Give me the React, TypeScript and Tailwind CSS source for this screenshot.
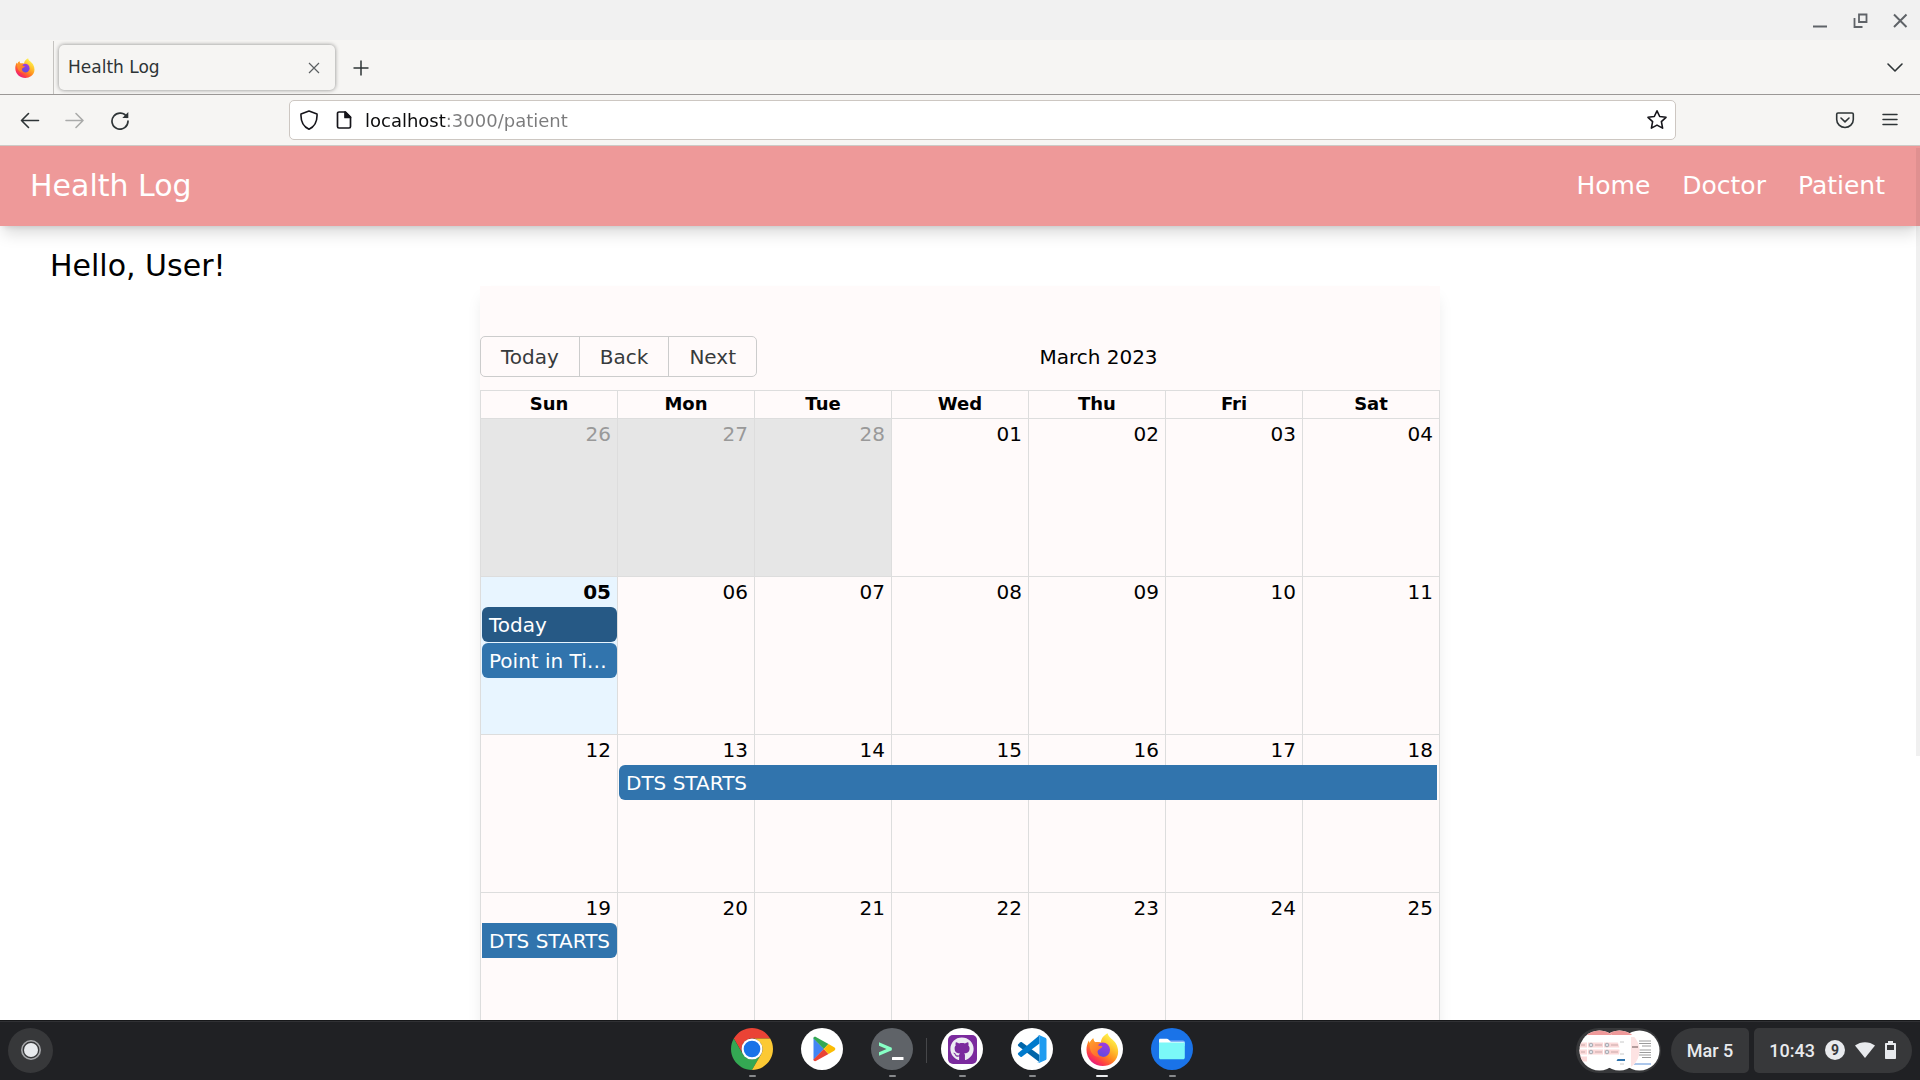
import type { ReactNode } from 'react';
import clsx from 'clsx';
import { FaGithub } from 'react-icons/fa';

interface CalendarEvent {
  title: string;
  width: string;
  className: string;
}

interface Day {
  label: string;
  offRange?: boolean;
  today?: boolean;
  events?: CalendarEvent[];
}

interface ShelfApp {
  name: string;
  icon: ReactNode;
  running?: boolean;
  active?: boolean;
}

const WEEKDAYS = ['Sun', 'Mon', 'Tue', 'Wed', 'Thu', 'Fri', 'Sat'];

const WEEKS: Day[][] = [
  [
    { label: '26', offRange: true },
    { label: '27', offRange: true },
    { label: '28', offRange: true },
    { label: '01' },
    { label: '02' },
    { label: '03' },
    { label: '04' },
  ],
  [
    {
      label: '05',
      today: true,
      events: [
        { title: 'Today', width: 'w-full', className: 'rounded-md bg-[#265985]' },
        { title: 'Point in Time Event', width: 'w-full', className: 'rounded-md bg-[#3174ad]' },
      ],
    },
    { label: '06' },
    { label: '07' },
    { label: '08' },
    { label: '09' },
    { label: '10' },
    { label: '11' },
  ],
  [
    { label: '12' },
    {
      label: '13',
      events: [
        { title: 'DTS STARTS', width: 'w-[calc(600%+8px)]', className: 'rounded-l-md bg-[#3174ad]' },
      ],
    },
    { label: '14' },
    { label: '15' },
    { label: '16' },
    { label: '17' },
    { label: '18' },
  ],
  [
    {
      label: '19',
      events: [{ title: 'DTS STARTS', width: 'w-full', className: 'rounded-r-md bg-[#3174ad]' }],
    },
    { label: '20' },
    { label: '21' },
    { label: '22' },
    { label: '23' },
    { label: '24' },
    { label: '25' },
  ],
];

function FirefoxLogo({ size, id }: { size: number; id: string }) {
  return (
    <svg width={size} height={size} viewBox="0 0 32 32">
      <defs>
        <linearGradient id={`${id}-body`} x1="0.8" y1="0.1" x2="0.2" y2="0.95">
          <stop offset="0" stopColor="#fff44f" />
          <stop offset="0.3" stopColor="#ffc02c" />
          <stop offset="0.55" stopColor="#ff8a1e" />
          <stop offset="0.8" stopColor="#ff3f46" />
          <stop offset="1" stopColor="#e31587" />
        </linearGradient>
        <linearGradient id={`${id}-globe`} x1="0.7" y1="0" x2="0.3" y2="1">
          <stop offset="0" stopColor="#a33be0" />
          <stop offset="1" stopColor="#5b4be0" />
        </linearGradient>
        <linearGradient id={`${id}-head`} x1="0" y1="0" x2="0.6" y2="1">
          <stop offset="0" stopColor="#ffa52a" />
          <stop offset="1" stopColor="#ff6a2e" />
        </linearGradient>
      </defs>
      <path
        d="M21 .3C21.6 4.6 26.6 6 29 10.2c3.8 7 2.5 14.2-3 18.6-5.8 4.4-14.8 4.2-20.4-.8C-.8 22.3-.6 13.2 2.8 7.2l.7 2.6C4.3 8 5.5 6.500 7 5.200c.1 1.800.8 2.900 1.800 3.700 2-.4 4.200-.2 5.600.3C14.600 5.500 17.400 2 21 .3Z"
        fill={`url(#${id}-body)`}
      />
      <circle cx="16.300" cy="16.300" r="7" fill={`url(#${id}-globe)`} />
      <path
        d="M3.500 9.800C4.300 8 5.500 6.500 7 5.200c.1 1.800.8 2.900 1.800 3.700 2-.4 4.200-.2 5.600.3-1.800 1-2.400 2-2.400 3.100l3.800.4c.2 1.500-1.200 2.200-3.200 3.200-1 .6-1.600 1.400-1.300 3 .3 2.200 2.200 4 5.200 4.200-5 1.600-9.500-.8-11.500-4.600-1.300-2.900-1.500-5.900-1.500-8.700Z"
        fill={`url(#${id}-head)`}
      />
    </svg>
  );
}

function ChromeIcon() {
  return (
    <svg width="42" height="42" viewBox="0 0 48 48">
      <path d="M3.220 12A24 24 0 0 1 44.780 12H24A12 12 0 0 0 13.610 30Z" fill="#ea4335" />
      <path d="M3.220 12L13.610 30A12 12 0 0 0 34.390 30L24 48A24 24 0 0 1 3.220 12Z" fill="#34a853" />
      <path d="M44.780 12A24 24 0 0 1 24 48L34.390 30A12 12 0 0 0 24 12Z" fill="#fcc934" />
      <circle cx="24" cy="24" r="12" fill="#fff" />
      <circle cx="24" cy="24" r="9.500" fill="#1a73e8" />
    </svg>
  );
}

function PlayIcon() {
  return (
    <svg width="42" height="42" viewBox="0 0 42 42">
      <circle cx="21" cy="21" r="21" fill="#fff" />
      <path d="M12.500 10v22L23 21Z" fill="#4285f4" />
      <path d="M12.300 10.200c.4-1.300 1.700-1.700 3-1L27.500 16 22.800 21Z" fill="#34a853" />
      <path d="M12.300 31.800c.4 1.300 1.700 1.700 3 1L27.500 26 22.800 21Z" fill="#ea4335" />
      <path d="M27.500 16l5.700 3.300c1.500.9 1.500 2.500 0 3.400L27.500 26l-4.800-5Z" fill="#fbbc04" />
    </svg>
  );
}

function TerminalIcon() {
  return (
    <svg width="42" height="42" viewBox="0 0 42 42">
      <circle cx="21" cy="21" r="21" fill="#5f6368" />
      <path d="M8 14.300v3.500l7.500 3.200L8 24.200v3.500l12.800-5.400v-2.600Z" fill="#87ffc5" />
      <rect x="21" y="29" width="11.500" height="3" rx="0.500" fill="#fff" />
    </svg>
  );
}

function GithubIcon() {
  return (
    <span className="flex size-[42px] items-center justify-center rounded-full bg-white">
      <span className="flex size-[29px] items-center justify-center rounded-[5px] bg-[#7b2a9e]">
        <FaGithub className="size-6 text-[#ececf2]" />
      </span>
    </span>
  );
}

function CodeIcon() {
  return (
    <svg width="42" height="42" viewBox="0 0 42 42">
      <circle cx="21" cy="21" r="21" fill="#fff" />
      <path d="M7.200 16.300l2.200-2c.5-.4 1-.4 1.500-.1L28.500 27v7.200L7.200 17.900c-.5-.5-.5-1.100 0-1.600Z" fill="#0065a9" />
      <path d="M7.200 26.700l2.200 2c.5.4 1 .4 1.500.1L28.500 15.500V7.200L7.200 25.100c-.5.500-.5 1.100 0 1.600Z" fill="#007acc" />
      <path d="M28 7l6.200 2.700c.9.400 1.300 1 1.300 1.900v18.800c0 .9-.4 1.500-1.300 1.900L28 35c-.900.300-1.500 0-2-.5.900.700 2.500.200 2.500-1.200V8.700c0-1.400-1.600-1.900-2.500-1.200.5-.5 1.100-.8 2-.5Z" fill="#1f9cf0" />
    </svg>
  );
}

function FirefoxShelfIcon() {
  return (
    <span className="flex size-[42px] items-center justify-center rounded-full bg-white">
      <FirefoxLogo size={33} id="shelf-firefox" />
    </span>
  );
}

function FilesIcon() {
  return (
    <svg width="42" height="42" viewBox="0 0 42 42">
      <circle cx="21" cy="21" r="21" fill="#1a73e8" />
      <path d="M18 12.500h14c1 0 1.800.8 1.800 1.800V18H18Z" fill="#8ab4f8" />
      <path d="M8 12c0-.8.600-1.300 1.300-1.300H16c.5 0 .9.200 1.200.5l2.800 2.800H32c1 0 1.800.8 1.800 1.500H8Z" fill="#fff" />
      <path d="M8 14.500h25.800v15c0 1-.8 1.800-1.800 1.800H9.800c-1 0-1.800-.8-1.800-1.800Z" fill="#7bf8f8" />
    </svg>
  );
}

const SHELF_APPS: ShelfApp[] = [
  { name: 'Chrome', icon: <ChromeIcon />, running: true },
  { name: 'Play Store', icon: <PlayIcon /> },
  { name: 'Terminal', icon: <TerminalIcon />, running: true },
  { name: 'GitHub Desktop', icon: <GithubIcon />, running: true },
  { name: 'Visual Studio Code', icon: <CodeIcon />, running: true },
  { name: 'Firefox', icon: <FirefoxShelfIcon />, running: true, active: true },
  { name: 'Files', icon: <FilesIcon />, running: true },
];

function WindowControls() {
  return (
    <div className="flex h-10 justify-end bg-[#f1f1f1]">
      <button aria-label="Minimize" className="flex w-10 items-center justify-center">
        <svg width="20" height="20" viewBox="0 0 20 20" stroke="#5f6368" strokeWidth="2">
          <path d="M3 16.500h14" />
        </svg>
      </button>
      <button aria-label="Restore" className="flex w-10 items-center justify-center">
        <svg width="20" height="20" viewBox="0 0 20 20" fill="none" stroke="#5f6368" strokeWidth="1.800">
          <path d="M9 4.500h7.500V12H9ZM4.500 8v9H12.500" />
        </svg>
      </button>
      <button aria-label="Close" className="flex w-10 items-center justify-center">
        <svg width="20" height="20" viewBox="0 0 20 20" stroke="#5f6368" strokeWidth="2">
          <path d="M4 4.500l12.500 12.500M16.500 4.500L4 17" />
        </svg>
      </button>
    </div>
  );
}

function TabStrip() {
  return (
    <div className="flex h-[55px] items-center border-b border-[#9b9896] bg-[#f6f5f3] pt-px text-[#2e3436]">
      <button aria-label="Firefox View" className="flex w-[54px] items-center justify-center self-stretch border-r border-[#c4c2bf] pr-1">
        <FirefoxLogo size={20} id="tab-firefox" />
      </button>
      <div className="ml-[5px] flex h-[45px] w-[276px] items-center justify-between rounded-[5px] bg-[#f6f5f3] pr-[9px] pl-[9px] shadow-[0_0_4px_rgba(0,0,0,0.45)]">
        <span className="text-[17px]">Health Log</span>
        <button aria-label="Close tab" className="flex size-6 items-center justify-center">
          <svg width="12" height="12" viewBox="0 0 12 12" stroke="#5b5f61" strokeWidth="1.200">
            <path d="M1 1l10 10M11 1L1 11" />
          </svg>
        </button>
      </div>
      <button aria-label="New tab" className="ml-[6px] flex size-10 items-center justify-center">
        <svg width="16" height="16" viewBox="0 0 16 16" stroke="#2e3436" strokeWidth="1.500">
          <path d="M8 .5v15M.5 8h15" />
        </svg>
      </button>
      <button aria-label="List all tabs" className="mr-[5px] ml-auto flex size-10 items-center justify-center">
        <svg width="18" height="12" viewBox="0 0 18 12" fill="none" stroke="#2e3436" strokeWidth="1.600" strokeLinecap="round" strokeLinejoin="round">
          <path d="M2 2l7 7 7-7" />
        </svg>
      </button>
    </div>
  );
}

function ToolButton({ label, children }: { label: string; children: ReactNode }) {
  return (
    <button aria-label={label} className="flex h-10 w-[45px] items-center justify-center">
      {children}
    </button>
  );
}

function AddressBar() {
  return (
    <div className="flex h-[51px] items-center border-b border-[#cdcac6] bg-[#f6f5f3] pr-2 pl-[7px]">
      <ToolButton label="Back">
        <svg width="20" height="20" viewBox="0 0 20 20" fill="none" stroke="#2e3436" strokeWidth="1.600" strokeLinecap="round" strokeLinejoin="round">
          <path d="M18.500 10.500H1.500M8.500 3.500l-7 7 7 7" />
        </svg>
      </ToolButton>
      <ToolButton label="Forward">
        <svg width="20" height="20" viewBox="0 0 20 20" fill="none" stroke="#aaabaa" strokeWidth="1.600" strokeLinecap="round" strokeLinejoin="round">
          <path d="M1 10.500h17M11 3.500l7 7-7 7" />
        </svg>
      </ToolButton>
      <ToolButton label="Reload">
        <svg width="20" height="20" viewBox="0 0 20 20" fill="none" stroke="#2e3436" strokeWidth="1.700" strokeLinecap="round">
          <path d="M17 7.300A8 8 0 1 0 18 11" />
          <path d="M18.300 2v6h-6Z" fill="#2e3436" stroke="none" />
        </svg>
      </ToolButton>
      <div className="mr-[146px] ml-[147px] flex h-10 flex-1 items-center rounded-[5px] border border-[#cdc7c2] bg-white">
        <button aria-label="Tracking protection" className="flex w-[38px] justify-center">
          <svg width="20" height="20" viewBox="0 0 20 20" fill="none" stroke="#15141a" strokeWidth="1.600" strokeLinejoin="round">
            <path d="M10 1l8 3c.400 7-2 12.500-8 15.200C4 16.500 1.600 11 2 4Z" />
          </svg>
        </button>
        <button aria-label="Site information" className="flex w-8 justify-center">
          <svg width="20" height="20" viewBox="0 0 20 20" fill="none" stroke="#15141a" strokeWidth="1.700" strokeLinejoin="round">
            <path d="M5 2h6.500l5 5v9.500c0 .8-.7 1.500-1.500 1.500H5c-.8 0-1.500-.7-1.500-1.500v-13C3.500 2.700 4.200 2 5 2Z" />
            <path d="M11 2v5.500h5.500Z" fill="#15141a" />
          </svg>
        </button>
        <input
          type="text"
          aria-label="Address"
          defaultValue="localhost:3000/patient"
          className="ml-[5px] h-full flex-1 bg-[linear-gradient(90deg,#0c0c0d_81px,#7b7b7c_81px)] bg-clip-text text-[18px] text-transparent caret-black outline-none"
        />
        <button aria-label="Bookmark this page" className="flex w-9 justify-center">
          <svg width="22" height="22" viewBox="0 0 22 22" fill="none" stroke="#15141a" strokeWidth="1.600" strokeLinejoin="round">
            <path d="M11 1.800l2.700 5.700 6.300.8-4.600 4.300 1.200 6.500-5.600-3-5.600 3 1.200-6.500L2 8.300l6.300-.8Z" />
          </svg>
        </button>
      </div>
      <ToolButton label="Save to Pocket">
        <svg width="20" height="20" viewBox="0 0 20 20" fill="none" stroke="#2e3436" strokeWidth="1.600" strokeLinecap="round" strokeLinejoin="round">
          <path d="M3 3h14c.8 0 1.300.5 1.300 1.300V9.500a8.300 8 0 0 1-16.600 0V4.300C1.700 3.500 2.200 3 3 3Z" />
          <path d="M6 8l4 3.800L14 8" />
        </svg>
      </ToolButton>
      <ToolButton label="Open menu">
        <svg width="20" height="20" viewBox="0 0 20 20" stroke="#2e3436" strokeWidth="1.500" strokeLinecap="round">
          <path d="M3 4.500h14M3 9.500h14M3 14.500h14" />
        </svg>
      </ToolButton>
    </div>
  );
}

function SiteHeader() {
  return (
    <header className="relative flex h-20 items-center justify-between bg-[#ee9999] pr-[35px] pl-[30px] text-white shadow-[0_10px_15px_-3px_rgba(0,0,0,0.15),0_4px_6px_-4px_rgba(0,0,0,0.15)]">
      <span className="text-[30px] leading-10">Health Log</span>
      <nav className="flex gap-8 text-[25px] leading-8">
        <a href="#home">Home</a>
        <a href="#doctor">Doctor</a>
        <a href="#patient">Patient</a>
      </nav>
    </header>
  );
}

function DayCell({ day }: { day: Day }) {
  return (
    <td
      className={clsx(
        'h-[158px] border-t border-l border-[#dddddd] p-0 align-top',
        day.offRange && 'bg-[#e6e6e6] text-[#999999]',
        day.today && 'bg-[#e8f5ff]',
      )}
    >
      <div className={clsx('pr-[6px] text-right leading-[30px]', day.today && 'font-bold')}>
        {day.label}
      </div>
      {day.events && (
        <div className="flex flex-col gap-px pl-px">
          {day.events.map((event) => (
            <button
              key={event.title}
              className={clsx(
                'relative h-[35px] truncate pr-[5px] pl-[7px] text-left text-white',
                event.width,
                event.className,
              )}
            >
              {event.title}
            </button>
          ))}
        </div>
      )}
    </td>
  );
}

function MonthCalendar() {
  return (
    <section className="mx-auto w-1/2 bg-[#fffafa] pt-[50px] text-[20px] shadow-[0_10px_15px_-3px_rgba(0,0,0,0.1)]">
      <div className="mb-[13px] flex items-center">
        <div className="flex h-[41px] divide-x divide-[#cccccc] rounded-[5px] border border-[#cccccc] text-[#373a3c]">
          <button className="px-5">Today</button>
          <button className="px-5">Back</button>
          <button className="px-5">Next</button>
        </div>
        <span className="flex-1 text-center">March 2023</span>
      </div>
      <table className="w-full table-fixed border-separate border-spacing-0 border-r border-[#dddddd]">
        <thead>
          <tr>
            {WEEKDAYS.map((weekday) => (
              <th key={weekday} className="h-7 border-t border-l border-[#dddddd] p-0 align-top text-[18px] leading-[25px] font-bold">
                {weekday}
              </th>
            ))}
          </tr>
        </thead>
        <tbody>
          {WEEKS.map((week) => (
            <tr key={week[0].label}>
              {week.map((day) => (
                <DayCell key={day.label} day={day} />
              ))}
            </tr>
          ))}
        </tbody>
      </table>
    </section>
  );
}

// Miniature previews of the recently saved screen captures
function RecentCaptures() {
  return (
    <button aria-label="Recent captures" className="mr-[10px]">
      <svg width="85" height="45" viewBox="0 0 85 45">
        <defs>
          <clipPath id="capture-1"><circle cx="23.500" cy="22.500" r="20" /></clipPath>
          <clipPath id="capture-2"><circle cx="43.500" cy="22.500" r="20" /></clipPath>
          <clipPath id="capture-3"><circle cx="63.500" cy="22.500" r="20" /></clipPath>
        </defs>
        <rect width="85" height="45" rx="22.500" fill="#37383a" />
        <g clipPath="url(#capture-3)">
          <rect x="43" y="2" width="42" height="41" fill="#fff" />
          <path d="M63 13h12M63 15.500h12M66 18h9M63 22h12M63 24.500h12M63 27h12M66 29.500h9" stroke="#9b9b9b" />
          <path d="M58 36h17" stroke="#5b8fd8" />
        </g>
        <g clipPath="url(#capture-2)">
          <rect x="23" y="2" width="42" height="41" fill="#fff" />
          <rect x="23" y="2" width="42" height="5" fill="#ee9999" />
          <rect x="55" y="9" width="10" height="34" fill="#fde3e3" />
          <path d="M56 19h6" stroke="#6b5555" />
          <path d="M44 14h4M44 26h4M44 36h4" stroke="#c8c8c8" />
          <path d="M39 32h10" stroke="#3174ad" strokeWidth="2" />
        </g>
        <g clipPath="url(#capture-1)">
          <rect x="3" y="2" width="42" height="41" fill="#fff" />
          <rect x="3" y="2" width="42" height="5" fill="#ee9999" />
          <path d="M3 17h8M12 17h15M28 17h17M3 24h8M12 24h15M28 24h17M3 31h8" stroke="#fbd9d9" strokeWidth="5" />
          <path d="M19 17h7M35 17h7M19 24h7M35 24h7M5 17h4M5 24h4" stroke="#c9a9a9" />
          <g fill="#dce3ea" stroke="#8c959c" strokeWidth="0.700">
            <circle cx="15" cy="17" r="1.800" />
            <circle cx="31" cy="17" r="1.800" />
            <circle cx="15" cy="24" r="1.800" />
            <circle cx="31" cy="24" r="1.800" />
          </g>
        </g>
      </svg>
    </button>
  );
}

function Shelf() {
  return (
    <footer className="grid h-[60px] shrink-0 grid-cols-[1fr_auto_1fr] items-center bg-[#202124] px-2 shadow-[inset_0_1px_#17181a,inset_0_2px_#303134]">
      <button aria-label="Launcher" className="flex size-[45px] items-center justify-center rounded-full bg-[#37383a]">
        <svg width="22" height="22" viewBox="0 0 22 22">
          <circle cx="11" cy="11" r="9.200" fill="none" stroke="#a5a6a9" strokeWidth="1.600" />
          <circle cx="11" cy="11" r="7" fill="#e8eaed" />
        </svg>
      </button>
      <div className="flex pl-1">
        {SHELF_APPS.map((app, index) => (
          <div key={app.name} className="flex items-center">
            {index === 3 && <span className="-ml-px h-[25px] w-px bg-[#46474a]" />}
            <button aria-label={app.name} className="flex h-[60px] w-[70px] flex-col items-center gap-[5px] pt-2">
              {app.icon}
              {app.running && (
                <span
                  className={clsx(
                    'h-[2px] rounded-full',
                    app.active ? 'w-3 bg-[#e8eaed]' : 'w-[7px] bg-[#87898c]',
                  )}
                />
              )}
            </button>
          </div>
        ))}
      </div>
      <div className="flex items-center justify-end font-['Roboto',sans-serif] text-[18px] font-medium text-[#e8eaed]">
        <RecentCaptures />
        <button className="mr-[5px] h-[45px] rounded-l-[23px] rounded-r-[5px] bg-[#37383a] px-4">
          Mar 5
        </button>
        <button className="flex h-[45px] items-center gap-[10px] rounded-l-[5px] rounded-r-[23px] bg-[#37383a] pr-4 pl-[15px]">
          <span>10:43</span>
          <span className="flex size-5 items-center justify-center rounded-full bg-[#e8eaed] text-[14px] font-bold text-[#37383a]">
            9
          </span>
          <svg width="20" height="16" viewBox="0 0 20 16" fill="#e8eaed">
            <path d="M10 16L0 3.500C5.800-1 14.200-1 20 3.500Z" />
          </svg>
          <svg width="11" height="18" viewBox="0 0 11 18" fill="#e8eaed">
            <path d="M3 0h5v2h2c.6 0 1 .4 1 1v14c0 .6-.4 1-1 1H1c-.6 0-1-.4-1-1V3c0-.6.4-1 1-1h2Z" />
            <path d="M2 4h7v5H2Z" fill="#37383a" />
          </svg>
        </button>
      </div>
    </footer>
  );
}

export default function App() {
  return (
    <div className="flex h-screen flex-col bg-white font-['DejaVu_Sans',sans-serif] text-black">
      <WindowControls />
      <TabStrip />
      <AddressBar />
      <main className="relative min-h-0 flex-1 overflow-hidden">
        <SiteHeader />
        <h1 className="pt-5 pl-[50px] text-[30px] leading-10">Hello, User!</h1>
        <MonthCalendar />
        <div className="absolute top-[2px] right-0 h-3/4 max-h-[608px] w-1 bg-black/6" />
      </main>
      <Shelf />
    </div>
  );
}
